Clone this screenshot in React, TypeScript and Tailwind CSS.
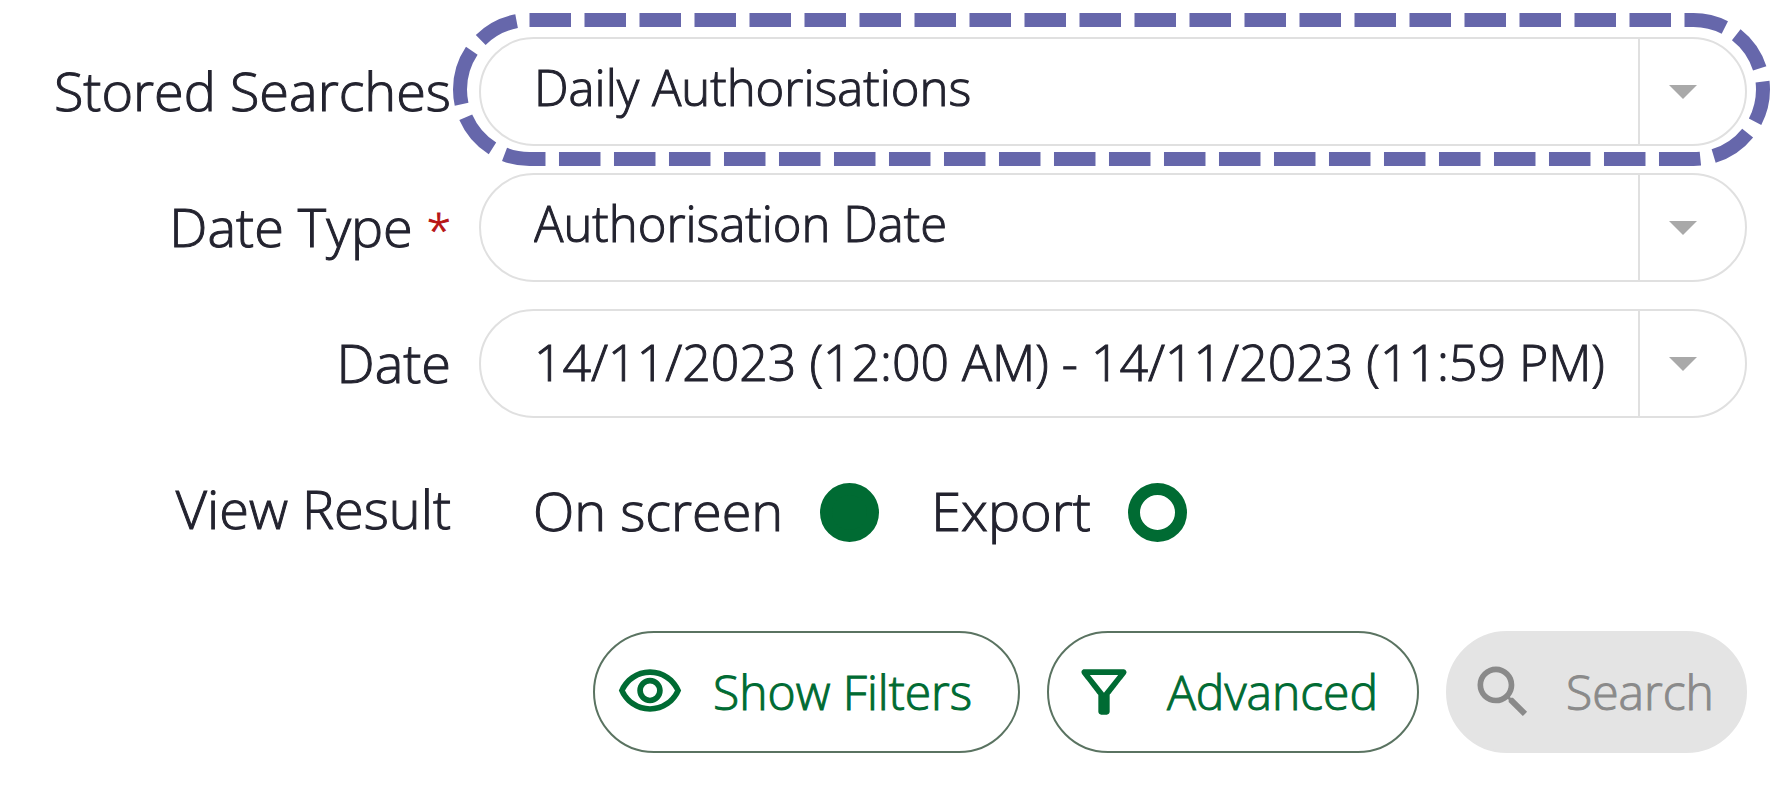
import type { ReactNode } from 'react';
import { MdOutlineFilterAlt, MdOutlineVisibility, MdSearch } from 'react-icons/md';

const labelClass = 'text-right text-[54px] leading-none whitespace-nowrap';
const fieldClass =
  'h-full min-w-0 flex-1 appearance-none bg-transparent pl-[53px] leading-normal font-light outline-none [-webkit-text-stroke:1px_currentColor]';

function Caret() {
  return (
    <svg aria-hidden="true" className="h-3.5 w-7" viewBox="0 0 28 14">
      <path d="M0 0h28L14 14z" fill="#a9a9a9" />
    </svg>
  );
}

function Pill({ children }: { children: ReactNode }) {
  return (
    <div className="relative flex h-[109px] items-stretch rounded-full border-2 border-[#e0e0e0]">
      {children}
    </div>
  );
}

function CaretCell() {
  return (
    <span className="pointer-events-none flex w-[107px] shrink-0 items-center border-l-2 border-[#e0e0e0] pl-[29px]">
      <Caret />
    </span>
  );
}

function Highlight() {
  const dashes = Array.from({ length: 48 }, () => '41.5 13.5').join(' ') + ' 56 14 41 14';
  return (
    <svg
      aria-hidden="true"
      className="pointer-events-none absolute -top-[26px] -left-[28px] h-[153px] w-[calc(100%+53px)]"
      viewBox="0 0 1317 153"
      preserveAspectRatio="none"
    >
      <rect
        x="7"
        y="7"
        width="1303"
        height="139"
        rx="69.5"
        fill="none"
        stroke="#6667ab"
        strokeWidth="14"
        strokeDasharray={dashes}
      />
    </svg>
  );
}

function ViewOption({ label, checked }: { label: string; checked?: boolean }) {
  return (
    <label className="flex items-center gap-[37px] text-[54px] leading-none">
      <span className="pb-1">{label}</span>
      <input
        type="radio"
        name="view-result"
        defaultChecked={checked}
        className="size-[59px] shrink-0 appearance-none rounded-full border-12 border-[#006b33] checked:bg-[#006b33]"
      />
    </label>
  );
}

function ActionButton({
  icon,
  label,
  width,
  disabled,
}: {
  icon: ReactNode;
  label: string;
  width: string;
  disabled?: boolean;
}) {
  return (
    <button
      type="button"
      disabled={disabled}
      className={`${width} flex h-[122px] items-center gap-[29px] rounded-full border-2 border-[#5a7361] pr-[30px] pl-[21px] text-[48px] leading-none whitespace-nowrap text-[#006b33] disabled:border-[#e4e4e4] disabled:bg-[#e4e4e4] disabled:text-[#8a8a8a]`}
    >
      {icon}
      {label}
    </button>
  );
}

export default function App() {
  return (
    <form className="bg-white pt-[37px] pr-[34px] pb-9 pl-9 font-['Open_Sans',sans-serif] font-light text-[#23232f] [-webkit-text-stroke:1px_currentColor]">
      <div className="grid grid-cols-[415px_1fr] items-center gap-x-7 gap-y-[27px]">
        <label htmlFor="stored" className={`${labelClass} pb-1`}>Stored Searches</label>
        <Pill>
          <select id="stored" className={`${fieldClass} pb-2 text-[49px]`}>
            <option>Daily Authorisations</option>
          </select>
          <CaretCell />
          <Highlight />
        </Pill>

        <label htmlFor="date-type" className={`${labelClass} pb-1`}>
          Date Type <span className="text-[44px] leading-none text-[#b81414]">*</span>
        </label>
        <Pill>
          <select id="date-type" className={`${fieldClass} pb-2 text-[49px]`}>
            <option>Authorisation Date</option>
          </select>
          <CaretCell />
        </Pill>

        <label htmlFor="date" className={`${labelClass} pb-1`}>Date</label>
        <Pill>
          <input
            id="date"
            type="text"
            defaultValue="14/11/2023 (12:00 AM) - 14/11/2023 (11:59 PM)"
            className={`${fieldClass} pb-1 text-[50px]`}
          />
          <CaretCell />
        </Pill>
      </div>

      <div role="radiogroup" aria-labelledby="view-label" className="mt-[63px] grid grid-cols-[415px_1fr] items-center gap-x-7">
        <span id="view-label" className={`${labelClass} pb-2`}>View Result</span>
        <div className="flex items-center gap-[52px] pl-[54px]">
          <ViewOption label="On screen" checked />
          <ViewOption label="Export" />
        </div>
      </div>

      <div className="mt-[88px] flex justify-end gap-[27px]">
        <ActionButton icon={<MdOutlineVisibility strokeWidth="0" className="size-[68px] shrink-0" />} label="Show Filters" width="min-w-[427px]" />
        <ActionButton icon={<MdOutlineFilterAlt strokeWidth="0" className="size-[68px] shrink-0" />} label="Advanced" width="min-w-[372px]" />
        <ActionButton icon={<MdSearch strokeWidth="0" className="size-[68px] shrink-0" />} label="Search" width="min-w-[301px]" disabled />
      </div>
    </form>
  );
}
